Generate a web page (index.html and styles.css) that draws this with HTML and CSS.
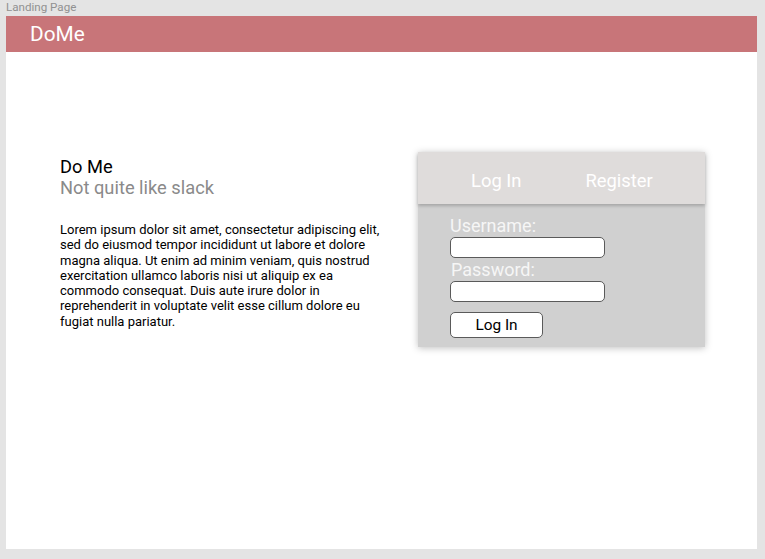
FILE: index.html
```html
<!DOCTYPE html>
<html>
<head>
<meta charset="utf-8">
<link rel="stylesheet" href="styles.css">
</head>
<body>
<div class="label">Landing Page</div>
<div class="frame">
  <header class="topbar"><span class="brand">DoMe</span></header>
  <main class="content">
    <section class="intro">
      <h1 class="title">Do Me</h1>
      <h2 class="subtitle">Not quite like slack</h2>
      <p class="lorem">Lorem ipsum dolor sit amet, consectetur adipiscing elit, sed do eiusmod tempor incididunt ut labore et dolore magna aliqua. Ut enim ad minim veniam, quis nostrud exercitation ullamco laboris nisi ut aliquip ex ea commodo consequat. Duis aute irure dolor in reprehenderit in voluptate velit esse cillum dolore eu fugiat nulla pariatur.</p>
    </section>
    <section class="card">
      <div class="tabs">
        <span class="tab">Log In</span>
        <span class="tab">Register</span>
      </div>
      <form class="form">
        <label class="field-label">Username:</label>
        <input class="input" type="text">
        <label class="field-label pw">Password:</label>
        <input class="input" type="password">
        <button class="btn" type="button">Log In</button>
      </form>
    </section>
  </main>
</div>
</body>
</html>
```
FILE: styles.css
```css
html, body { margin: 0; padding: 0; }
body {
  background: #e4e4e4;
  font-family: Roboto, "Liberation Sans", sans-serif;
  width: 765px;
  height: 559px;
  overflow: hidden;
}
.label {
  font-size: 11.6px;
  color: #919191;
  padding: 1px 0 0 6px;
  height: 15px;
  line-height: 13px;
}
.frame {
  margin-left: 6px;
  width: 751px;
  height: 533px;
  background: #ffffff;
}
.topbar {
  height: 36px;
  background: #c87579;
  display: flex;
  align-items: center;
  padding-left: 24px;
}
.brand {
  color: #ffffff;
  font-size: 20.8px;
  line-height: 24px;
}
.content {
  display: flex;
  padding: 100px 0 0 54px;
}
.intro {
  width: 330px;
}
.title {
  margin: 4px 0 0 0;
  font-weight: normal;
  font-size: 18.3px;
  line-height: 21px;
  color: #000;
}
.subtitle {
  margin: 0;
  font-weight: normal;
  font-size: 18.3px;
  line-height: 21px;
  color: #8a8a8a;
}
.lorem {
  margin: 24px 0 0 0;
  font-size: 13px;
  line-height: 15.3px;
  color: #000;
}
.card {
  margin-left: 28px;
  width: 287px;
  height: 195px;
  background: #d0d0d0;
  box-shadow: 0 1px 7px rgba(0,0,0,0.25);
  display: flex;
  flex-direction: column;
}
.tabs {
  box-sizing: border-box;
  height: 52px;
  padding-top: 4px;
  background: #dfdcdb;
  box-shadow: 0 2px 3px rgba(0,0,0,0.2);
  display: flex;
  align-items: center;
  position: relative;
}
.tab {
  color: #ffffff;
  font-size: 18.4px;
  line-height: 21px;
}
.tab:first-child { margin-left: 53px; }
.tab + .tab { margin-left: 64px; }
.form {
  display: flex;
  flex-direction: column;
  align-items: flex-start;
  padding: 11px 0 0 32px;
}
.field-label {
  color: #f6f6f6;
  font-size: 18px;
  line-height: 21px;
  height: 21px;
}
.field-label.pw { margin-top: 1px; margin-left: 1px; }
.input {
  box-sizing: border-box;
  width: 155px;
  height: 21px;
  margin: 1px 0 0 0;
  border: 1px solid #5a5a5a;
  border-radius: 5px;
  background: #fff;
  padding: 0;
}
.btn {
  box-sizing: border-box;
  margin-top: 10px;
  width: 93px;
  height: 26px;
  border: 1px solid #5a5a5a;
  border-radius: 5px;
  background: #fff;
  font-family: Roboto, "Liberation Sans", sans-serif;
  font-size: 15.4px;
  color: #000;
  padding: 0;
}
```
